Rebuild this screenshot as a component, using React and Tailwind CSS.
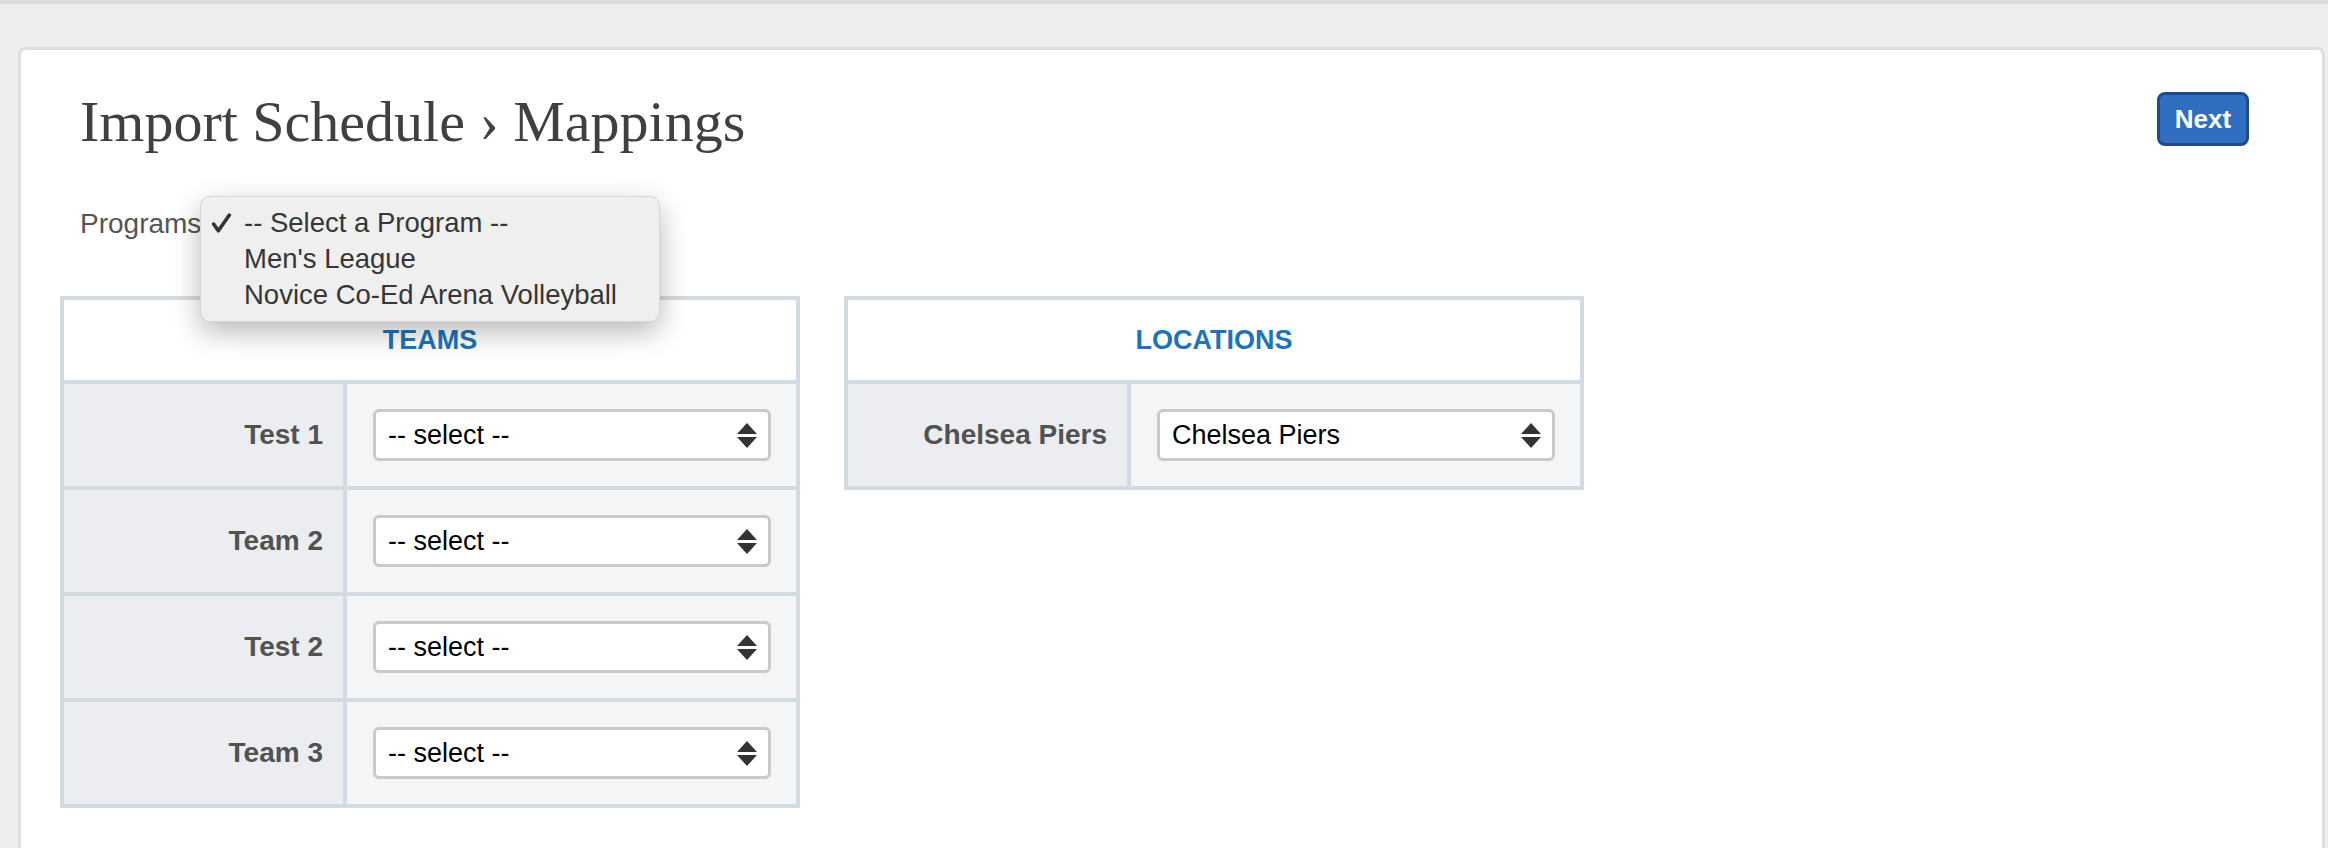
import React from "react";

const sans = { fontFamily: '"Liberation Sans", Arial, Helvetica, sans-serif' };

function SelectBox({ value }) {
  return (
    <div className="ml-[26px] flex h-[52px] w-[398px] items-center justify-between rounded-[6px] border-[3px] border-[#c9c9c9] bg-white pl-[12px] pr-[10px] text-[27px] text-black">
      <span>{value}</span>
      <svg width="22" height="27" viewBox="0 0 22 27" className="shrink-0">
        <path d="M11 1 L21 12 L1 12 Z" fill="#333" />
        <path d="M11 26 L21 15 L1 15 Z" fill="#333" />
      </svg>
    </div>
  );
}

function MappingTable({ title, rows }) {
  return (
    <div className="w-[740px] border-4 border-[#d3dbe2]">
      <div className="flex h-[84px] items-center justify-center border-b-4 border-[#d3dbe2] bg-white text-[27px] font-bold text-[#1d74b9]">
        {title}
      </div>
      {rows.map((row, i) => (
        <div
          key={row.label}
          className={
            "flex h-[102px] " + (i < rows.length - 1 ? "box-content border-b-4 border-[#d3dbe2]" : "")
          }
        >
          <div className="flex w-[283px] items-center justify-end border-r-4 border-[#d3dbe2] bg-[#ebedf0] pr-[20px] text-[28px] font-bold text-[#525252]">
            {row.label}
          </div>
          <div className="flex flex-1 items-center bg-[#f4f5f7]">
            <SelectBox value={row.value} />
          </div>
        </div>
      ))}
    </div>
  );
}

export default function App() {
  const teams = [
    { label: "Test 1", value: "-- select --" },
    { label: "Team 2", value: "-- select --" },
    { label: "Test 2", value: "-- select --" },
    { label: "Team 3", value: "-- select --" },
  ];
  const locations = [{ label: "Chelsea Piers", value: "Chelsea Piers" }];

  return (
    <div className="h-[848px] overflow-hidden bg-[#eeeeee]" style={sans}>
      <div className="h-[4px] bg-[#dcdcdc]" />
      <div className="ml-[18px] mr-[3px] mt-[43px] min-h-[900px] rounded-[8px] border-[3px] border-[#dddddd] bg-white px-[39px]">
        {/* header */}
        <div className="flex items-start justify-between pl-[20px] pr-[34px] pt-[38px]">
          <h1
            className="text-[58px] leading-[68px] text-[#404040]"
            style={{ fontFamily: '"Liberation Serif", Georgia, serif' }}
          >
            Import Schedule › Mappings
          </h1>
          <button className="mt-[4px] h-[54px] w-[92px] rounded-[8px] border-[3px] border-[#1f4a8c] bg-[#2f6ec1] text-[26px] font-bold text-white">
            Next
          </button>
        </div>

        {/* programs */}
        <div className="relative mt-[48px] pl-[20px] text-[28px] leading-[40px] text-[#555555]">
          Programs
          <div className="absolute left-[140px] top-[-8px] z-10 w-[460px] rounded-[10px] border border-[#d6d6d6] bg-[#efefef] py-[8px] text-[27.5px] leading-[36px] text-[#363636] shadow-[0_10px_28px_rgba(0,0,0,0.28)]">
            <div className="relative pl-[43px]">
              <svg
                width="21"
                height="21"
                viewBox="0 0 20 20"
                className="absolute left-[10px] top-[8px]"
              >
                <path
                  d="M2.5 10.5 L7 17 L17.5 2"
                  fill="none"
                  stroke="#333"
                  strokeWidth="3.4"
                  strokeLinecap="round"
                  strokeLinejoin="round"
                />
              </svg>
              -- Select a Program --
            </div>
            <div className="pl-[43px]">Men's League</div>
            <div className="pl-[43px]">Novice Co-Ed Arena Volleyball</div>
          </div>
        </div>

        {/* tables */}
        <div className="mt-[52px] flex items-start gap-[44px]">
          <MappingTable title="TEAMS" rows={teams} />
          <MappingTable title="LOCATIONS" rows={locations} />
        </div>
      </div>
    </div>
  );
}
